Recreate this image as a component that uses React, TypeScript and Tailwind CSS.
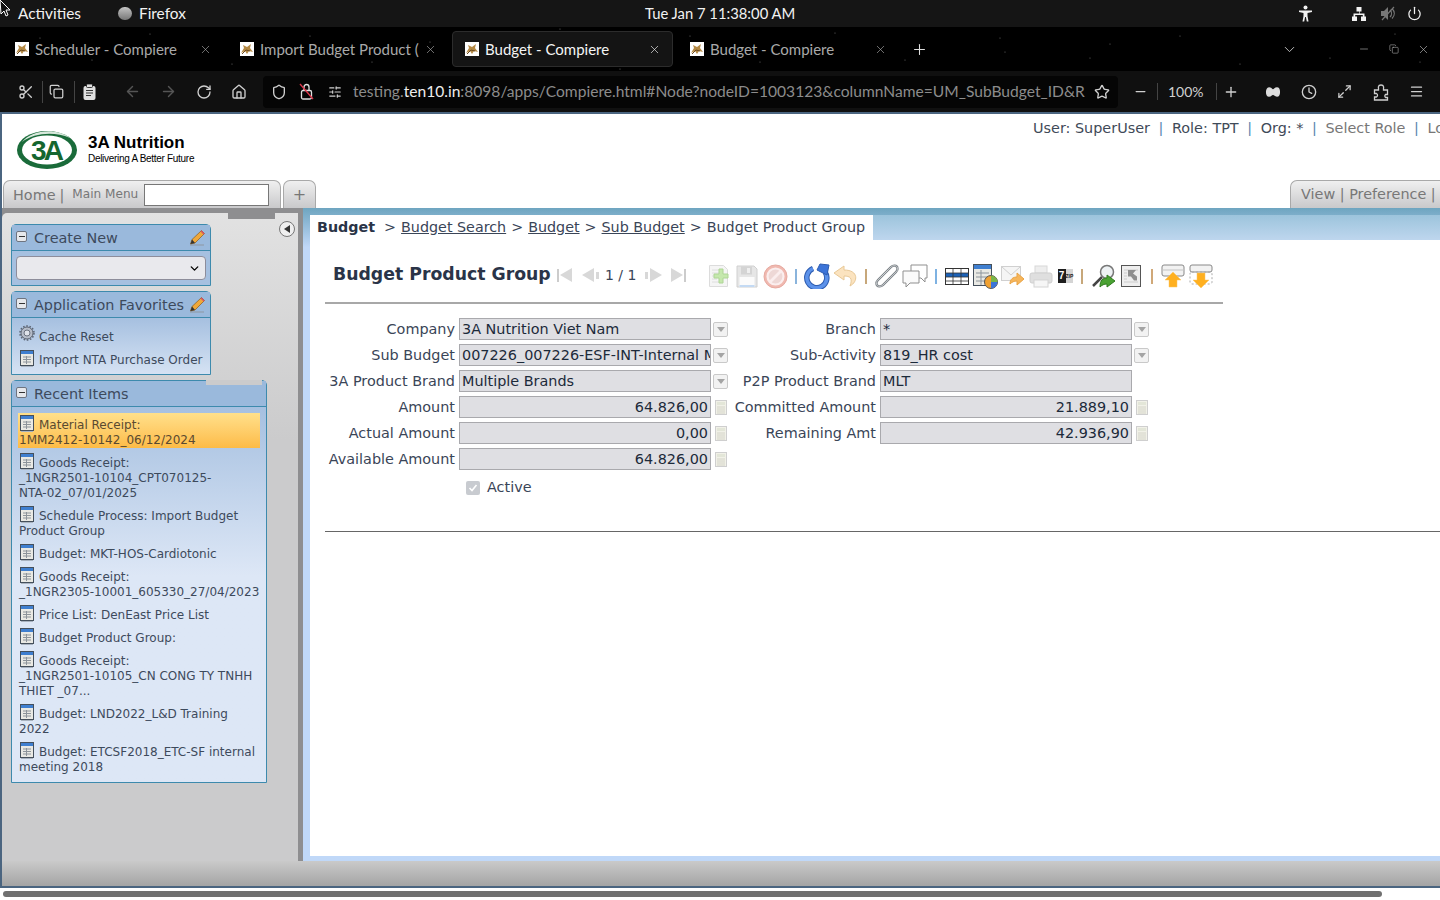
import { ArrowLeft, ArrowRight, ChevronDown, Clock, Copy, House, Maximize2, Menu, Minus, Plus, Power, RotateCw, Scissors, Shield, SlidersHorizontal, Star, X } from "lucide-react";
import type { ReactNode } from "react";

const tabs = [
  { title: "Scheduler - Compiere" },
  { title: "Import Budget Product (" },
  { title: "Budget - Compiere", active: true },
  { title: "Budget - Compiere" },
];

const recentItems = [
  { lines: ["Material Receipt:", "1MM2412-10142_06/12/2024"], active: true },
  { lines: ["Goods Receipt:", "_1NGR2501-10104_CPT070125-", "NTA-02_07/01/2025"] },
  { lines: ["Schedule Process: Import Budget", "Product Group"] },
  { lines: ["Budget: MKT-HOS-Cardiotonic"] },
  { lines: ["Goods Receipt:", "_1NGR2305-10001_605330_27/04/2023"] },
  { lines: ["Price List: DenEast Price List"] },
  { lines: ["Budget Product Group:"] },
  { lines: ["Goods Receipt:", "_1NGR2501-10105_CN CONG TY TNHH", "THIET _07..."] },
  { lines: ["Budget: LND2022_L&D Training", "2022"] },
  { lines: ["Budget: ETCSF2018_ETC-SF internal", "meeting 2018"] },
];

const stars = [[40, 38], [92, 60], [150, 34], [232, 64], [310, 36], [372, 62], [430, 42], [690, 36], [760, 62], [835, 33], [905, 60], [1000, 38], [1005, 52], [1090, 58], [1180, 36], [1240, 64], [1330, 58], [1395, 34], [1420, 62], [1110, 44], [560, 29], [620, 69]];

function Favicon() {
  return (
    <svg width="14" height="14" viewBox="0 0 14 14" className="shrink-0">
      <rect width="14" height="14" fill="#fff" />
      <path d="M1 11 L4 6 L3 3 L7 5 L11 2 L10 6 L13 10 L9 9 L7 12 L5 9 Z" fill="#b58a45" />
      <path d="M2 12 L6 8 L10 9" stroke="#6b4a20" strokeWidth="1" fill="none" />
    </svg>
  );
}

function WindowIcon() {
  return (
    <svg width="14" height="17" viewBox="0 0 14 17" className="mt-[2px] shrink-0">
      <rect x="0.5" y="0.5" width="13" height="15" fill="#e9e9e4" stroke="#45505c" />
      <rect x="1" y="1" width="12" height="3" fill="#3f7fd0" />
      <path d="M3 7h8M3 9.5h8M3 12h8M6.5 6v8" stroke="#8d949b" strokeWidth="1" />
      <path d="M1 16.5h12" stroke="#a9b3c0" />
    </svg>
  );
}

function Pencil() {
  return (
    <svg width="17" height="17" viewBox="0 0 17 17" className="shrink-0">
      <path d="M1 16h14" stroke="#8a8a8a" strokeWidth="0.7" />
      <path d="M1.5 15 L3 10.5 L12.5 1.5 L15.5 4.5 L6 14 Z" fill="#f0a83a" stroke="#8a5a1c" strokeWidth="0.7" />
      <path d="M12.5 1.5 L15.5 4.5 L14.5 5.5 L11.5 2.5 Z" fill="#d9506a" />
      <path d="M1.5 15 L3 10.5 L6 14 Z" fill="#333" />
    </svg>
  );
}

function MinusBox() {
  return <span className="-mt-[2px] flex h-[11px] w-[11px] shrink-0 items-center justify-center rounded-[2px] border border-[#6e7480] bg-[#e6e8ec]"><span className="h-px w-[6px] bg-[#333]" /></span>;
}

function Gear() {
  return (
    <svg width="16" height="16" viewBox="0 0 16 16" className="shrink-0">
      <circle cx="8" cy="8" r="6" fill="#b5bcc8" stroke="#5e6674" strokeWidth="1" />
      <circle cx="8" cy="8" r="7" fill="none" stroke="#5e6674" strokeWidth="1.6" strokeDasharray="1.6 1.6" />
      <circle cx="8" cy="8" r="3" fill="#dfe3ea" stroke="#6b7280" strokeWidth="1" />
    </svg>
  );
}

function Panel({ title, width, edit, children }: { title: string; width: string; edit?: boolean; children: ReactNode }) {
  return (
    <div className={`${width} rounded-t-[5px] border border-[#3d8aad]`}>
      <div className="flex h-[26px] items-center border-b border-[#3d8aad] bg-[#9ab9dc] pr-[4px] pl-[4px]">
        <MinusBox />
        <span className="ml-[7px] flex-1 pt-[2px] text-[14.4px] whitespace-nowrap text-[#3d4a5c]">{title}</span>
        {edit && <Pencil />}
      </div>
      {children}
    </div>
  );
}

function DropBtn() {
  return (
    <span className="-ml-[2px] flex h-[15px] w-[15px] shrink-0 items-center justify-center rounded-[2px] border border-[#c9c9c9] bg-[#f2f2f2]">
      <span className="h-0 w-0 border-x-[4px] border-t-[5px] border-x-transparent border-t-[#a4a4a4]" />
    </span>
  );
}

function CalcBtn() {
  return (
    <svg width="12" height="15" viewBox="0 0 12 15">
      <rect x="0.5" y="0.5" width="11" height="14" fill="#f1f1e8" stroke="#cfcfcf" />
      <rect x="2" y="2" width="8" height="3" fill="#e3e6d8" />
      <path d="M2 7h8M2 9h8M2 11h8M2 13h8" stroke="#d4d4c8" />
    </svg>
  );
}

function Field({ label, value, right, action }: { label: string; value: string; right?: boolean; action?: "drop" | "calc" }) {
  return (
    <>
      <span className="text-right text-[14.4px] leading-[22px] whitespace-nowrap text-[#3a4557]">{label}</span>
      <span className={`h-[22px] overflow-hidden border border-[#a9a9ad] bg-[#dfdfe3] px-[2px] text-[14.4px] leading-[20px] whitespace-nowrap text-[#1c2a3a] ${right ? "text-right" : ""}`}>{value}</span>
      <span className="flex h-[22px] items-center">{action === "drop" ? <DropBtn /> : action === "calc" ? <CalcBtn /> : null}</span>
    </>
  );
}

function Sep({ color }: { color: string }) {
  return <span className={`mx-[6px] h-[15px] w-[2px] ${color}`} />;
}

const tool = "h-[26px] w-[28px] flex items-center justify-center shrink-0";

function Toolbar() {
  return (
    <div className="mt-[2px] flex items-center">
      <span className={tool}>
        <svg width="23" height="24" viewBox="0 0 23 24"><path d="M1.5 1.5h14l4 4v17h-18z" fill="#f5f5f5" stroke="#dcdcdc" /><path d="M4 6h8M4 9h7M4 12h5M4 15h5M4 18h7" stroke="#dedede" /><path d="M11 5h4v5h5v4h-5v5h-4v-5H6v-4h5z" fill="#c5e8ad" stroke="#aed596" /></svg>
      </span>
      <span className={tool}>
        <svg width="22" height="23" viewBox="0 0 22 23"><path d="M1 1h17l3 3v18H1z" fill="#e6e6e6" stroke="#d0d0d0" /><rect x="5" y="1.5" width="11" height="8" fill="#d4d4d4" /><rect x="11" y="3" width="3" height="5" fill="#efefef" /><rect x="3.5" y="12" width="15" height="10" fill="#fbfbfb" /><path d="M3.5 21h15" stroke="#c4daf3" strokeWidth="2" /></svg>
      </span>
      <span className={tool}>
        <svg width="25" height="25" viewBox="0 0 25 25"><circle cx="12.5" cy="12.5" r="11.5" fill="#f0b9b0" stroke="#e7aaa1" /><circle cx="12.5" cy="12.5" r="8" fill="#eed8d6" stroke="#fbeeee" strokeWidth="2.2" /><path d="M6.8 18.2 L18.2 6.8" stroke="#fbeeee" strokeWidth="2.8" /></svg>
      </span>
      <Sep color="bg-[#8ab4dc]" />
      <span className={tool}>
        <svg width="26" height="26" viewBox="0 0 26 26"><path d="M9 5.5 A10 10 0 1 0 21 9" fill="none" stroke="#2d5cb0" strokeWidth="5.5" /><path d="M9 5.5 A10 10 0 1 0 21 9" fill="none" stroke="#5c92ea" strokeWidth="3.5" /><path d="M13 7 L16 1 L25 2 L23 12 Z" fill="#3c74d8" stroke="#2d5cb0" /></svg>
      </span>
      <span className={tool}>
        <svg width="25" height="23" viewBox="0 0 25 23"><path d="M11 1 L1 8 L11 15 V11 C17 11 20 13 17 21 C25 17 26 5 11 5 Z" fill="#fbe3bf" stroke="#e8c896" /></svg>
      </span>
      <Sep color="bg-[#c7a77a]" />
      <span className={tool}>
        <svg width="26" height="26" viewBox="0 0 26 26"><path d="M7 14 L17 4 C19 2 23 2 23.5 5 C24 7 23 8 22 9 L9 22 C7 24 3 24 2.5 21 C2 19 3 18 4 17 L14 7" fill="none" stroke="#7d8388" strokeWidth="2.4" /><path d="M7 14 L17 4 C19 2 23 2 23.5 5 C24 7 23 8 22 9 L9 22 C7 24 3 24 2.5 21 C2 19 3 18 4 17 L14 7" fill="none" stroke="#d2d5d8" strokeWidth="0.8" /></svg>
      </span>
      <span className={tool}>
        <svg width="26" height="24" viewBox="0 0 26 24"><path d="M9 1h16v13h-2v4l-4-4H9z" fill="#fff" stroke="#8f8f8f" /><path d="M1 7h16v12H8l-4 4v-4H1z" fill="#fafafa" stroke="#8f8f8f" /></svg>
      </span>
      <Sep color="bg-[#7eb2e2]" />
      <span className={tool}>
        <svg width="24" height="17" viewBox="0 0 24 17"><rect x="0.5" y="0.5" width="23" height="16" fill="#fff" stroke="#333" /><rect x="1" y="5" width="22" height="4" fill="#1c62b8" /><path d="M1 5h22M1 9h22M1 13h22M8 1v15M16 1v15" stroke="#333" strokeWidth="0.8" /></svg>
      </span>
      <span className={tool}>
        <svg width="25" height="25" viewBox="0 0 25 25"><rect x="0.5" y="0.5" width="18" height="21" fill="#e9e9e4" stroke="#45505c" /><rect x="1" y="1" width="17" height="4" fill="#3f7fd0" /><path d="M3 9h13M3 13h13M3 17h13M8 6v15" stroke="#8d949b" /><circle cx="18" cy="18" r="6.5" fill="#f0a030" stroke="#555" /><path d="M18 18V11.5A6.5 6.5 0 0 1 24.5 18z" fill="#7ab648" /><path d="M18 18h6.5A6.5 6.5 0 0 1 18 24.5z" fill="#3c74d8" /></svg>
      </span>
      <span className={tool}>
        <svg width="24" height="22" viewBox="0 0 24 22"><rect x="0.5" y="1.5" width="19" height="14" fill="#f5f5f5" stroke="#d0d0d0" /><path d="M1 2 L10 10 L19 2" fill="none" stroke="#d0d0d0" /><path d="M9 19 C9 14 12 12 16 12 V8 L23 14 L16 20 V16 C13 16 11 17 9 19Z" fill="#f6b65c" stroke="#e9a344" /></svg>
      </span>
      <span className={tool}>
        <svg width="24" height="23" viewBox="0 0 24 23"><rect x="6" y="1" width="12" height="7" fill="#eee" stroke="#d8d8d8" /><rect x="1" y="8" width="22" height="10" rx="2" fill="#dfdfdf" stroke="#cfcfcf" /><rect x="5" y="15" width="14" height="7" fill="#f6f6f6" stroke="#d4d4d4" /></svg>
      </span>
      <span className="flex h-[26px] w-[20px] shrink-0 items-center justify-center">
        <span className="flex h-[14px] w-[15px] items-center justify-center bg-[#d4d4d4]">
          <span className="flex h-[14px] w-[8px] items-center justify-center bg-[#1e1e1e] text-[10px] leading-none font-bold text-white [font-family:'Liberation_Sans',sans-serif]">7</span>
          <span className="w-[7px] text-[5px] leading-none font-bold text-[#222] [font-family:'Liberation_Sans',sans-serif]">ZIP</span>
        </span>
      </span>
      <Sep color="bg-[#c7a77a]" />
      <span className={tool}>
        <svg width="25" height="25" viewBox="0 0 25 25"><path d="M11 13 L2 22" stroke="#444" strokeWidth="2.5" /><circle cx="16" cy="8" r="6.5" fill="#eef2f4" stroke="#777" strokeWidth="1.5" /><path d="M9 23 C9 16 12 14 16 14 V11 L24 17 L16 23 V20 C13 20 11 21 9 23Z" fill="#4aa232" stroke="#2f7a1e" /></svg>
      </span>
      <span className={tool}>
        <svg width="21" height="23" viewBox="0 0 21 23"><rect x="0.5" y="0.5" width="19" height="21" fill="#eee" stroke="#555" /><path d="M3 5h14M3 8h3M3 11h3M3 14h3M3 17h14" stroke="#ccc" /><path d="M7 5h8l-3 3.5 4 3v4h-3l-3-4H7z" fill="#8f8f8f" /></svg>
      </span>
      <Sep color="bg-[#d0a878]" />
      <span className={tool}>
        <svg width="24" height="24" viewBox="0 0 24 24"><rect x="1" y="1" width="22" height="11" rx="2" fill="#f2f2f2" stroke="#888" /><path d="M1 6h22" stroke="#c4c4c4" strokeWidth="1" /><path d="M12 8 L20 16 H16 V23 H8 V16 H4 Z" fill="#ffb020" stroke="#fbc765" strokeWidth="0.5" /></svg>
      </span>
      <span className={tool}>
        <svg width="24" height="24" viewBox="0 0 24 24"><rect x="1" y="1" width="22" height="7" rx="2" fill="#f2f2f2" stroke="#888" /><rect x="1" y="8" width="22" height="12" rx="2" fill="none" stroke="#aaa" strokeDasharray="2 2" /><path d="M12 24 L20 16 H16 V9 H8 V16 H4 Z" fill="#ffb020" stroke="#fbc765" strokeWidth="0.5" /></svg>
      </span>
    </div>
  );
}

function MenuRow({ icon, children }: { icon: ReactNode; children: ReactNode }) {
  return (
    <div className="flex h-[20px] items-start gap-[4px]">
      <span className="flex w-[16px] shrink-0 justify-center">{icon}</span>
      <span className="mt-[5px] leading-[15px] whitespace-nowrap">{children}</span>
    </div>
  );
}

export default function App() {
  return (
    <div className="relative flex h-[900px] w-[1440px] flex-col overflow-hidden bg-white [font-family:'DejaVu_Sans',sans-serif]">
      {/* desktop top bar */}
      <div className="relative flex h-[27px] shrink-0 items-center bg-[#151515] text-[15.4px] text-[#f2f2f2] [font-family:Lato,sans-serif]">
        <svg width="11" height="17" viewBox="0 0 11 17" className="absolute top-0 left-0"><path d="M0 0 L10 10 L6 10 L8 15 L6 16 L4 11 L1 14 Z" fill="#111" stroke="#fff" /></svg>
        <span className="ml-[18px]">Activities</span>
        <span className="ml-[37px] h-[13px] w-[14px] rounded-full bg-gradient-to-b from-[#c4c4c4] to-[#777]" />
        <span className="ml-[7px]">Firefox</span>
        <span className="absolute left-[645px] text-[14.8px]">Tue Jan 7  11:38:00 AM</span>
        <span className="ml-auto flex items-center">
          <svg width="17" height="17" viewBox="0 0 17 17" className="mr-[37px]"><circle cx="8.5" cy="2.5" r="2" fill="#f2f2f2" /><path d="M2 5.5h13v1.6l-4.5.8V11l1 5.5h-1.7L8.9 12h-.8l-.9 4.5H5.5l1-5.5V7.9L2 7.1z" fill="#f2f2f2" /></svg>
          <svg width="16" height="16" viewBox="0 0 16 16" className="mr-[13px]"><path d="M5.5 1h5v4.5h-1.7V7.4H13.5V10.500h1.500V15h-5v-4.500h1.800V9H4.200v1.500H6V15H1v-4.500h1.500V7.400h5.700V5.500H5.500z" fill="#f2f2f2" /></svg>
          <svg width="15" height="15" viewBox="0 0 15 15" className="mr-[12px]"><path d="M1 5h3l4-4v13l-4-4H1z" fill="#777" /><path d="M10 4c2 2 2 5 0 7M12 2.500c3 3 3 7 0 10M14 1 2 14" stroke="#777" strokeWidth="1.200" fill="none" /></svg>
          <Power size={15} className="mr-[18px]" />
        </span>
      </div>

      {/* tab strip */}
      <div className="relative flex h-[44px] shrink-0 items-center gap-[4px] bg-black pl-[2px] text-[15px] text-[#a9a9a9] [font-family:Lato,sans-serif]">
        <svg width="1440" height="98" className="absolute top-[-27px] left-0">
          {stars.map(([x, y]) => <circle key={`${x}-${y}`} cx={x} cy={y} r="0.6" fill="#6a6a6a" />)}
        </svg>
        {tabs.map((t, i) => (
          <div key={i} className={`relative flex h-[36px] w-[221px] shrink-0 items-center rounded-[4px] pr-[11px] ${t.active ? "border border-[#2c2c2c] bg-[#141414] pl-[12px] text-[#f5f5f5]" : "pl-[13px]"}`}>
            <Favicon />
            <span className="ml-[6px] flex-1 overflow-hidden whitespace-nowrap">{t.title}</span>
            <X size={13} strokeWidth={1.2} className="ml-[2px] shrink-0" />
          </div>
        ))}
        <Plus size={17} strokeWidth={1.5} className="relative ml-[9px] shrink-0 text-[#e0e0e0]" />
        <ChevronDown size={17} strokeWidth={1.3} className="relative ml-[349px] shrink-0 text-[#c8c8c8]" />
        <Minus size={12} strokeWidth={1.2} className="relative ml-[56px] shrink-0 text-[#bbb]" />
        <Copy size={10} strokeWidth={1.3} className="relative ml-[15px] shrink-0 text-[#bbb]" />
        <X size={13} strokeWidth={1.2} className="relative ml-[14px] shrink-0 text-[#bbb]" />
      </div>

      {/* browser toolbar */}
      <div className="flex h-[41px] shrink-0 items-center bg-[#101010] text-[#d0d0d0] [font-family:Lato,sans-serif]">
        <Scissors size={16} className="ml-[18px]" />
        <span className="ml-[8px] h-[22px] w-px bg-[#444]" />
        <Copy size={15} className="ml-[6px]" />
        <span className="ml-[10px] h-[22px] w-px bg-[#444]" />
        <svg width="15" height="18" viewBox="0 0 15 18" className="ml-[7px]"><rect x="1.500" y="3" width="12" height="14" rx="2" fill="#e0e0e0" /><rect x="4.500" y="1" width="6" height="3.500" rx="1" fill="#e0e0e0" stroke="#101010" strokeWidth="0.800" /><path d="M4 7.500h7M4 10h7M4 12.500h5" stroke="#333" /></svg>
        <ArrowLeft size={17} className="ml-[27px] text-[#555]" />
        <ArrowRight size={17} className="ml-[19px] text-[#555]" />
        <RotateCw size={16} className="ml-[19px]" />
        <House size={16} className="ml-[19px]" />
        <div className="ml-[16px] flex h-[32px] w-[855px] items-center rounded-[4px] bg-[#050505] pl-[8px]">
          <Shield size={16} />
          <svg width="15" height="17" viewBox="0 0 15 17" className="ml-[12px]"><rect x="2.500" y="7.500" width="10" height="8.500" rx="1.500" fill="none" stroke="#e0e0e0" strokeWidth="1.300" /><path d="M5 7.500V4a2.500 2.500 0 0 1 5 0v3.500" fill="none" stroke="#e0e0e0" strokeWidth="1.300" /><path d="M1 1 14 16" stroke="#e0354a" strokeWidth="1.300" /></svg>
          <SlidersHorizontal size={14} className="ml-[14px]" />
          <span className="ml-[11px] w-[733px] overflow-hidden text-[15.6px] whitespace-nowrap text-[#8c8c8c]">testing.<span className="text-[#ededed]">ten10.in</span>:8098/apps/Compiere.html#Node?nodeID=1003123&amp;columnName=UM_SubBudget_ID&amp;R</span>
          <Star size={16} className="ml-[8px] shrink-0" />
        </div>
        <Minus size={15} className="ml-[15px]" />
        <span className="ml-[9px] h-[17px] w-px bg-[#444]" />
        <span className="ml-[10px] text-[14px]">100%</span>
        <span className="ml-[12px] h-[17px] w-px bg-[#444]" />
        <Plus size={16} className="ml-[6px]" />
        <svg width="16" height="10" viewBox="0 0 16 10" className="ml-[26px]"><path d="M4 1 C6 1 7 3 8 3 C9 3 10 1 12 1 C15 1 15 9 12 9 C10 9 9 7 8 7 C7 7 6 9 4 9 C1 9 1 1 4 1Z" fill="#ddd" stroke="#ddd" strokeWidth="1.600" /></svg>
        <Clock size={16} className="ml-[20px]" />
        <Maximize2 size={15} className="ml-[20px]" />
        <svg width="16" height="18" viewBox="0 0 16 18" className="ml-[21px]"><path d="M1.500 7h4V5a2 2 0 0 1 0-1.500C6 1.500 10 1.500 10.500 3.500a2 2 0 0 1 0 1.500v2h4v4.500h-2a2 2 0 0 0 0 3h2V17h-13v-3h2a2 2 0 0 0 0-3.500h-2z" fill="none" stroke="#d0d0d0" strokeWidth="1.300" /></svg>
        <Menu size={15} className="ml-[20px]" />
      </div>

      {/* application */}
      <div className="flex min-h-0 flex-1 flex-col border-t-2 border-l-2 border-[#4b6580]">
        <header className="relative h-[94px] shrink-0">
          <div className="flex items-start">
            <svg width="62" height="40" viewBox="0 0 62 40" className="mt-[16px] ml-[14px]">
              <ellipse cx="31" cy="20" rx="30" ry="19" fill="#1a6b3a" />
              <ellipse cx="31" cy="20" rx="25" ry="14.500" fill="#fff" />
              <path d="M6 12 C16 -1 42 -2 54 8 C38 1 18 3 6 12Z" fill="#d8e8dc" />
              <text x="30" y="30" textAnchor="middle" fontSize="28" fontWeight="700" letterSpacing="-3" fill="#15662f" fontFamily="Liberation Sans">3A</text>
            </svg>
            <div className="mt-[19px] ml-[10px] text-black [font-family:'Liberation_Sans',sans-serif]">
              <div className="text-[17px] leading-[20px] font-bold">3A Nutrition</div>
              <div className="text-[10px] leading-[11px] tracking-[-0.3px]">Delivering A Better Future</div>
            </div>
            <div className="mt-[6px] ml-auto w-[407px] overflow-hidden text-[14.4px] leading-[16px] whitespace-nowrap text-[#3f4a58]">
              User: SuperUser <span className="mx-[4px] text-[#5a86b0]">|</span> Role: TPT <span className="mx-[4px] text-[#5a86b0]">|</span> Org: * <span className="mx-[4px] text-[#5a86b0]">|</span> <span className="text-[#777]">Select Role</span> <span className="mx-[4px] text-[#5a86b0]">|</span> <span className="text-[#777]">Logout</span>
            </div>
          </div>
          <div className="absolute bottom-0 left-px flex h-[28px] gap-[2px] text-[#777]">
            <div className="flex w-[278px] items-center rounded-t-[7px] border border-b-0 border-[#a9a9a9] bg-gradient-to-b from-[#f0f0f0] to-[#c9c9cb] pl-[9px]">
              <span className="pt-[2px] text-[14.4px]">Home</span>
              <span className="ml-[4px] pt-[2px] text-[14.4px]">|</span>
              <span className="ml-[8px] text-[12.1px]">Main Menu</span>
              <span className="ml-[6px] h-[22px] w-[125px] border border-[#777] bg-white" />
            </div>
            <div className="flex w-[33px] items-center justify-center rounded-t-[7px] border border-b-0 border-[#a9a9a9] bg-gradient-to-b from-[#f0f0f0] to-[#c9c9cb] text-[16px]">+</div>
          </div>
          <div className="absolute right-0 bottom-0 flex h-[28px] w-[150px] items-center rounded-tl-[7px] border-t border-l border-[#a9a9a9] bg-gradient-to-b from-[#f0f0f0] to-[#c9c9cb] pt-[1px] pl-[10px] text-[14.4px] whitespace-nowrap text-[#777]">View | Preference |</div>
        </header>

        <div className="flex min-h-0 flex-1">
          {/* sidebar */}
          <aside className="relative flex w-[301px] shrink-0 flex-col border-r-[5px] border-[#8e8e90] bg-[#8e8e90] pt-[5px]">
            <div className="flex-1 rounded-tl-[5px] bg-gradient-to-b from-[#e2e2e2] to-[#cbcbcc] to-[35%] pt-[11px] pl-[9px]">
              <div className="flex flex-col gap-[5px]">
                <Panel title="Create New" width="w-[200px]" edit>
                  <div className="bg-[#a6c0e0] px-[4px] py-[5px]">
                    <div className="flex h-[24px] items-center justify-end rounded-[4px] border border-[#8d8d9b] bg-[#e9e9ed] pr-[4px]">
                      <ChevronDown size={13} strokeWidth={2.5} className="text-black" />
                    </div>
                  </div>
                </Panel>
                <Panel title="Application Favorites" width="w-[200px]" edit>
                  <div className="flex flex-col gap-[3px] bg-gradient-to-b from-[#a6c0e0] to-[#d5e2f3] pt-[7px] pr-[2px] pb-[6px] pl-[7px] text-[12px] text-[#3d4a5c]">
                    <MenuRow icon={<Gear />}>Cache Reset</MenuRow>
                    <MenuRow icon={<WindowIcon />}>Import NTA Purchase Order</MenuRow>
                  </div>
                </Panel>
                <div className="relative">
                  <Panel title="Recent Items" width="w-[256px]">
                    <div className="flex flex-col gap-[3px] bg-gradient-to-b from-[#a6c0e0] to-[#dde7f6] to-[45%] px-[6px] pt-[6px] pb-[7px] text-[12px] leading-[15px] text-[#3d4a5c]">
                      {recentItems.map((item) => (
                        <div key={item.lines[0] + item.lines[1]} className={`pl-px whitespace-nowrap ${item.active ? "bg-gradient-to-b from-[#ffe08a] to-[#fdbb45] text-[#5a4a30]" : ""}`}>
                          <MenuRow icon={<WindowIcon />}>{item.lines[0]}</MenuRow>
                          {item.lines.slice(1).map((line) => <div key={line}>{line}</div>)}
                        </div>
                      ))}
                    </div>
                  </Panel>
                  <span className="absolute top-0 left-[195px] h-[5px] w-[56px] bg-[#cbcbcc]" />
                </div>
              </div>
            </div>
            <span className="absolute top-0 left-[226px] h-[11px] w-[47px] bg-[#8e8e90]" />
            <span className="absolute top-[13px] left-[277px] flex h-[16px] w-[16px] items-center justify-center rounded-full border border-[#777] bg-[#efefef]">
              <span className="h-0 w-0 border-y-[4px] border-r-[6px] border-y-transparent border-r-[#333]" />
            </span>
          </aside>

          {/* content */}
          <main className="relative min-w-0 flex-1 bg-gradient-to-b from-[#6ea5c0] to-[#c0d8f8] to-[6%] pt-[7px] pb-[5px] pl-[7px]">
            <div className="h-full bg-white">
              <div className="flex h-[25px] items-center bg-gradient-to-b from-[#9cc4dc] to-[#bed6ee]">
                <div className="flex h-[25px] w-[563px] items-center bg-white pl-[7px] text-[14.3px] whitespace-nowrap text-[#3a4557]">
                  <span className="font-bold text-[#2a3448]">Budget</span>
                  <span className="ml-[9px]">&gt;</span>
                  <span className="ml-[5px] underline">Budget Search</span>
                  <span className="ml-[5px]">&gt;</span>
                  <span className="ml-[5px] underline">Budget</span>
                  <span className="ml-[5px]">&gt;</span>
                  <span className="ml-[5px] underline">Sub Budget</span>
                  <span className="ml-[5px]">&gt;</span>
                  <span className="ml-[5px]">Budget Product Group</span>
                </div>
              </div>

              <div className="ml-[15px]">
                <div className="flex h-[64px] w-[898px] items-center border-b-2 border-[#a8a8a8] pt-[8px] pl-[8px]">
                  <span className="w-[224px] text-[17.3px] font-bold whitespace-nowrap text-[#2a3448]">Budget Product Group</span>
                  <span className="flex w-[148px] items-center text-[14px] text-[#3a4557]">
                    <span className="h-[13px] w-[2px] bg-[#ccc]" />
                    <span className="ml-[1px] h-0 w-0 border-y-[7px] border-r-[12px] border-y-transparent border-r-[#d8d8d8]" />
                    <span className="ml-[10px] h-0 w-0 border-y-[7px] border-r-[12px] border-y-transparent border-r-[#d8d8d8]" />
                    <span className="ml-[2px] h-[7px] w-[3px] bg-[#d8d8d8]" />
                    <span className="ml-[6px] whitespace-nowrap">1 / 1</span>
                    <span className="ml-[9px] h-[7px] w-[3px] bg-[#d8d8d8]" />
                    <span className="ml-[2px] h-0 w-0 border-y-[7px] border-l-[12px] border-y-transparent border-l-[#d8d8d8]" />
                    <span className="ml-[9px] h-0 w-0 border-y-[7px] border-l-[12px] border-y-transparent border-l-[#d8d8d8]" />
                    <span className="ml-[1px] h-[13px] w-[2px] bg-[#ccc]" />
                  </span>
                  <Toolbar />
                </div>

                <div className="mt-[14px] grid grid-cols-[130px_252px_15px_142px_252px_24px] gap-x-[4px] gap-y-[4px]">
                  <Field label="Company" value="3A Nutrition Viet Nam" action="drop" />
                  <Field label="Branch" value="*" action="drop" />
                  <Field label="Sub Budget" value="007226_007226-ESF-INT-Internal Meeting" action="drop" />
                  <Field label="Sub-Activity" value="819_HR cost" action="drop" />
                  <Field label="3A Product Brand" value="Multiple Brands" action="drop" />
                  <Field label="P2P Product Brand" value="MLT" />
                  <Field label="Amount" value="64.826,00" right action="calc" />
                  <Field label="Committed Amount" value="21.889,10" right action="calc" />
                  <Field label="Actual Amount" value="0,00" right action="calc" />
                  <Field label="Remaining Amt" value="42.936,90" right action="calc" />
                  <Field label="Available Amount" value="64.826,00" right action="calc" />
                </div>
                <div className="mt-[7px] ml-[141px] flex h-[22px] items-center gap-[7px] text-[14.4px] text-[#3a4557]">
                  <span className="flex h-[14px] w-[14px] items-center justify-center rounded-[2px] bg-[#c8cbd0]">
                    <svg width="10" height="10" viewBox="0 0 10 10"><path d="M1.500 5 L4 7.500 L8.500 2" fill="none" stroke="#fff" strokeWidth="1.600" /></svg>
                  </span>
                  Active
                </div>
                <div className="mt-[32px] h-px bg-[#666]" />
              </div>
            </div>
          </main>
        </div>

        <div className="h-[27px] shrink-0 border-b-2 border-[#4b6580] bg-gradient-to-b from-[#cacaca] to-[#a4a4a4]" />
      </div>

      {/* page scrollbar */}
      <div className="flex h-[12px] shrink-0 items-center pl-[3px]">
        <span className="h-[6px] w-[1379px] rounded-full bg-[#707070]" />
      </div>
    </div>
  );
}
